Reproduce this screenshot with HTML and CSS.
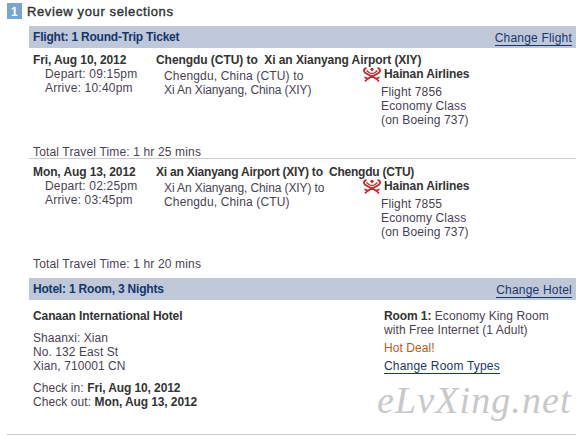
FILE: index.html
```
<!DOCTYPE html>
<html lang="en">
<head>
  <meta charset="UTF-8">
  <title>Review your selections</title>
  <link rel="stylesheet" href="styles.css">
</head>
<body>
  <svg class="defs" width="0" height="0">
    <symbol id="hainan" viewBox="0 0 18 15">
      <g fill="none" stroke="#c9252b">
        <path d="M3.500 1C.3 1.500 .3 4.500 2.500 6L9 9.500 15.500 6C17.700 4.500 17.700 1.500 14.500 1" stroke-width="1.900"/>
        <path d="M3.500 3.500L6 5.500q3 2 6 0L14.500 3.500" stroke-width="1.500"/>
        <path d="M9 9L5 11.800 1.500 10.300M9 9l4 2.800 3.500-1.500M5 11.500L2 14.300M13 11.500l3 2.800" stroke-width="1.700"/>
      </g>
      <circle cx="9" cy="2.300" r="1.600" fill="#c9252b"/>
    </symbol>
  </svg>

  <div class="review">
    <div class="title">
      <span class="step">1</span>
      <h1>Review your selections</h1>
    </div>

    <div class="content">
      <div class="bar">
        <h2>Flight: 1 Round-Trip Ticket</h2>
        <a href="#">Change Flight</a>
      </div>

      <div class="flight">
        <div class="times">
          <b>Fri, Aug 10, 2012</b>
          <p>Depart: 09:15pm</p>
          <p>Arrive: 10:40pm</p>
        </div>
        <div class="route">
          <b class="route-out">Chengdu (CTU) to&nbsp; Xi an Xianyang Airport (XIY)</b>
          <div class="route-info">
            <div class="cities">
              <p>Chengdu, China (CTU) to</p>
              <p class="tight">Xi An Xianyang, China (XIY)</p>
            </div>
            <div class="airline">
              <svg class="logo"><use href="#hainan"/></svg>
              <div>
                <b>Hainan Airlines</b>
                <div class="plane">
                  <p>Flight 7856</p>
                  <p>Economy Class</p>
                  <p>(on Boeing 737)</p>
                </div>
              </div>
            </div>
          </div>
        </div>
        <p class="total">Total Travel Time: 1 hr 25 mins</p>
      </div>

      <div class="flight return">
        <div class="times">
          <b>Mon, Aug 13, 2012</b>
          <p>Depart: 02:25pm</p>
          <p>Arrive: 03:45pm</p>
        </div>
        <div class="route">
          <b class="route-back">Xi an Xianyang Airport (XIY) to&nbsp; Chengdu (CTU)</b>
          <div class="route-info">
            <div class="cities">
              <p class="tight">Xi An Xianyang, China (XIY) to</p>
              <p>Chengdu, China (CTU)</p>
            </div>
            <div class="airline">
              <svg class="logo"><use href="#hainan"/></svg>
              <div>
                <b>Hainan Airlines</b>
                <div class="plane">
                  <p>Flight 7855</p>
                  <p>Economy Class</p>
                  <p>(on Boeing 737)</p>
                </div>
              </div>
            </div>
          </div>
        </div>
        <p class="total">Total Travel Time: 1 hr 20 mins</p>
      </div>

      <div class="bar">
        <h2>Hotel: 1 Room, 3 Nights</h2>
        <a href="#">Change Hotel</a>
      </div>

      <div class="hotel">
        <div class="address">
          <b>Canaan International Hotel</b>
          <div class="block">
            <p>Shaanxi: Xian</p>
            <p>No. 132 East St</p>
            <p>Xian, 710001 CN</p>
          </div>
          <div class="block">
            <p>Check in: <b>Fri, Aug 10, 2012</b></p>
            <p>Check out: <b>Mon, Aug 13, 2012</b></p>
          </div>
        </div>
        <div class="room">
          <p><b>Room 1:</b> Economy King Room</p>
          <p>with Free Internet (1 Adult)</p>
          <p class="deal">Hot Deal!</p>
          <a href="#">Change Room Types</a>
        </div>
      </div>
    </div>
    <div class="watermark">eLvXing.net</div>
  </div>
</body>
</html>
```
FILE: styles.css
```
body {
  margin: 0;
  background: #fff;
  font: 12px/14px "Liberation Sans", Arial, sans-serif;
  color: #4b3f54;
  letter-spacing: 0.15px;
  white-space: nowrap;
}

p, h1, h2 {
  margin: 0;
}

b {
  color: #333;
  letter-spacing: -0.1px;
}

a {
  color: #1b376c;
  text-decoration: none;
  border-bottom: 1px solid #1b376c;
  line-height: 13px;
  letter-spacing: 0.2px;
}

.defs {
  position: absolute;
}

.review {
  position: relative;
  box-sizing: border-box;
  width: 569px;
  height: 435px;
  margin-left: 7px;
  border-bottom: 1px solid #ccc;
}

/* heading */
.title {
  display: flex;
  height: 26px;
  box-sizing: border-box;
  padding-top: 3px;
}

.step {
  width: 15px;
  height: 16px;
  background: #79a5d4;
  color: #fff;
  font-weight: bold;
  line-height: 18px;
  text-align: center;
}

.title h1 {
  margin-left: 5px;
  font-size: 13px;
  font-weight: normal;
  line-height: 17px;
  color: #333;
  letter-spacing: 0.62px;
  -webkit-text-stroke: 0.4px #333;
}

.content {
  margin-left: 22px;
}

.bar {
  display: flex;
  justify-content: space-between;
  align-items: center;
  height: 22px;
  padding: 0 4px;
  background: #bec8d9;
}

.bar h2 {
  font-size: 12px;
  color: #13366b;
  letter-spacing: -0.2px;
}

.bar a {
  margin-top: 3px;
}

/* flights */
.flight {
  display: grid;
  grid-template-columns: 123px 1fr;
  grid-template-rows: 92px 14px;
  padding: 5px 0 0 4px;
  height: 105px;
}

.return {
  height: 113px;
  padding-top: 6px;
  border-top: 1px solid #ccc;
}

.times p {
  margin-left: 12px;
  letter-spacing: 0.2px;
}

.route-out {
  letter-spacing: -0.06px;
}

.route-info {
  display: flex;
}

.cities {
  width: 199px;
  padding: 2px 0 0 8px;
}

.cities .tight {
  letter-spacing: -0.1px;
}

.route-back {
  letter-spacing: -0.22px;
}

.airline {
  display: flex;
}

.logo {
  width: 18px;
  height: 15px;
  margin-right: 3px;
}

.plane {
  margin: 4px 0 0 -3px;
}

/* hotel */
.hotel {
  display: flex;
  padding: 9px 0 0 4px;
}

.address {
  width: 351px;
}

.block {
  margin-top: 8px;
  letter-spacing: 0.08px;
}

.room {
  letter-spacing: 0.08px;
}

.hotel .deal {
  margin: 4px 0;
  color: #c05a10;
}

.watermark {
  position: absolute;
  left: 370px;
  top: 378px;
  font: italic 38px/44px "Z003", "URW Chancery L", "Liberation Serif", serif;
  letter-spacing: 1.1px;
  color: #c8c8c8;
}
```
